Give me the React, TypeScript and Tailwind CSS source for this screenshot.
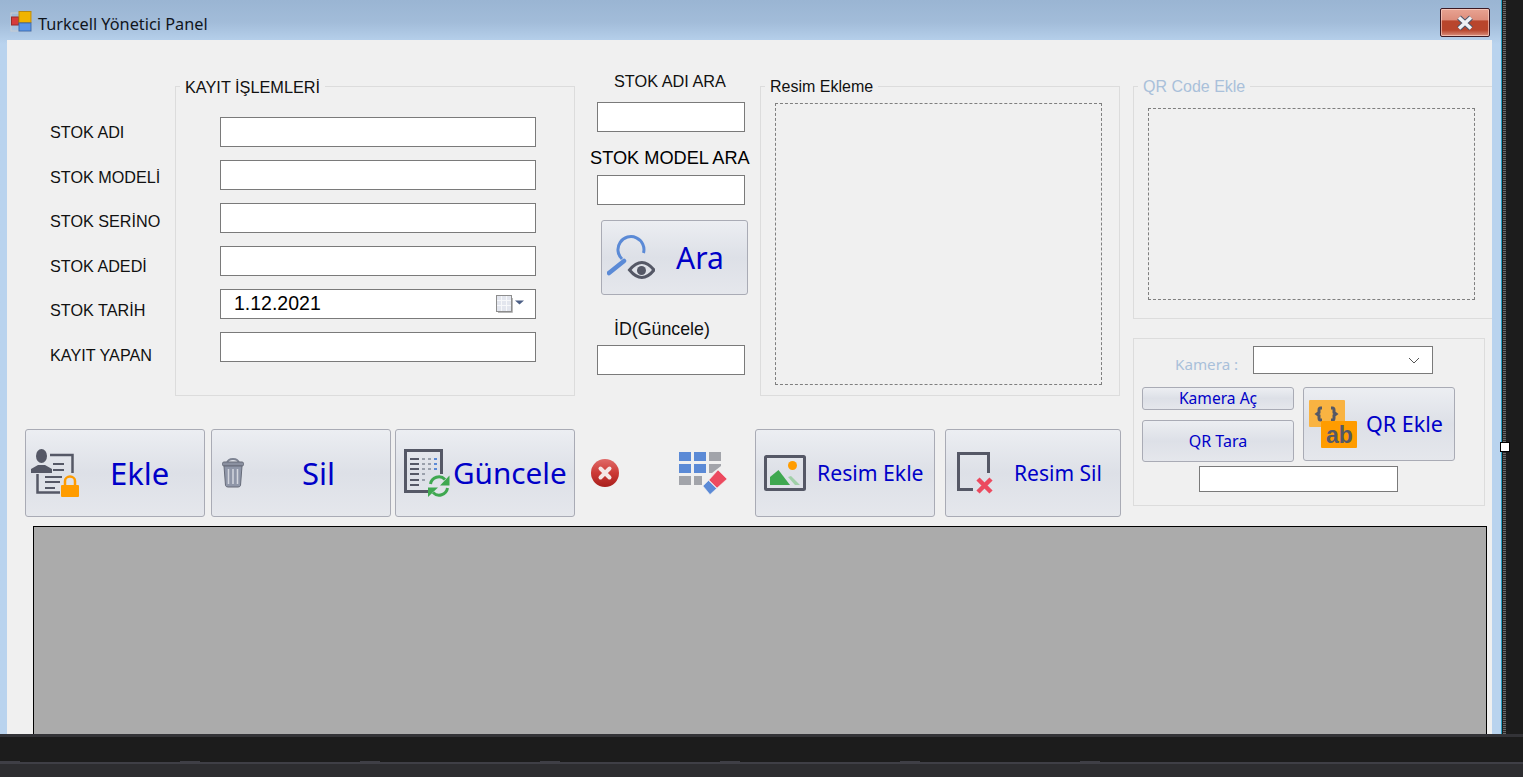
import { ReactNode } from 'react';

const sans = 'font-["Liberation_Sans",Arial,sans-serif]';
const tahoma = 'font-["Noto_Sans",sans-serif]';

function Input({ className = '' }: { className?: string }) {
    return <input className={`block border border-[#7a7a7a] bg-white ${className}`} />;
}

function FormButton({ className = '', children }: { className?: string; children: ReactNode }) {
    return (
        <div className={`flex shrink-0 items-center rounded-[3px] border border-[#a9abb5] bg-gradient-to-b from-[#eceef2] via-[#dde0e7] to-[#e5e7ec] text-[#0000c8] ${tahoma} ${className}`}>
            {children}
        </div>
    );
}

function EkleIcon() {
    return (
        <svg width="50" height="50" viewBox="30 448 50 50" className="ml-[4px] shrink-0">
            <path d="M50 455H72.500V473M37.500 474V492.500H60" fill="none" stroke="#555866" strokeWidth="2.500" />
            <path d="M53 464H64M53 470H64M45 477H62M45 482H60M45 488H55" stroke="#555866" strokeWidth="2" />
            <ellipse cx="41.500" cy="456" rx="5.500" ry="7" fill="#555866" />
            <path d="M31 473V469L38 465H45L52 469V473Z" fill="#555866" />
            <path d="M65 487V481A5 4.500 0 0 1 75 481V487" fill="none" stroke="#ff9c00" strokeWidth="2.500" />
            <rect x="61" y="485" width="18" height="12" rx="1" fill="#ff9c00" />
        </svg>
    );
}

function TrashIcon() {
    return (
        <svg width="24" height="30" viewBox="221 458 24 30" className="ml-[9px] shrink-0">
            <path d="M227 463Q228 459 233 459Q238 459 239 463" fill="none" stroke="#7d8392" strokeWidth="2" />
            <rect x="222.500" y="462" width="21" height="4" rx="1.500" fill="#8a90a0" stroke="#666b79" />
            <path d="M224 466H242L240.500 485.500Q240 487 238 487H228Q226 487 225.500 485.500Z" fill="#8f96a8" stroke="#666b79" />
            <path d="M228.500 469V484M233 469V484M237.500 469V484" stroke="#d3d6de" strokeWidth="1.500" />
        </svg>
    );
}

function GridRefreshIcon() {
    return (
        <svg width="46" height="48" viewBox="404 449 46 48" className="ml-[8px] shrink-0">
            <path d="M430 491.500H405.500V450.500H441.500V474" fill="none" stroke="#555866" strokeWidth="3" />
            <path d="M410 459H419M410 464H419M410 469H419M410 474H419M410 480H419M410 485H419" stroke="#555866" strokeWidth="2" />
            <path d="M422 459H425M428 459H431M422 464H425M428 464H431M422 469H425M428 469H431M422 474H425M422 480H425" stroke="#9aa0ab" strokeWidth="2" />
            <path d="M434 459H437M434 464H437M434 469H437" stroke="#5b8ad6" strokeWidth="2" />
            <path d="M430.500 484A8.500 8.500 0 0 1 445 479.500" fill="none" stroke="#3fa850" strokeWidth="3" />
            <path d="M449.500 475.500V485.500H440Z" fill="#3fa850" />
            <path d="M447.500 488A8.500 8.500 0 0 1 433 492.500" fill="none" stroke="#3fa850" strokeWidth="3" />
            <path d="M428 497V487.500H438Z" fill="#3fa850" />
        </svg>
    );
}

function RedCross() {
    return (
        <svg width="30" height="30" viewBox="0 0 30 30" className="shrink-0">
            <defs>
                <linearGradient id="redc" x1="0" y1="0" x2="0" y2="1">
                    <stop offset="0" stopColor="#e06a68" />
                    <stop offset="0.5" stopColor="#cc3a36" />
                    <stop offset="1" stopColor="#a81f1c" />
                </linearGradient>
            </defs>
            <circle cx="15" cy="15" r="14" fill="url(#redc)" />
            <path d="M10.500 10.500L19.500 19.500M19.500 10.500L10.500 19.500" stroke="#f4e6e6" strokeWidth="4" strokeLinecap="round" />
        </svg>
    );
}

function EraserIcon() {
    return (
        <svg width="48" height="44" viewBox="679 453 48 44" className="shrink-0">
            <path d="M679 454H691V463H679ZM694 454H706V463H694ZM679 466H691V475H679ZM694 466H706V475H694Z" fill="#5b8ad6" />
            <path d="M709 454H721V463H709ZM709 466H721V468L712 475H709ZM679 478H691V487H679ZM694 478H702V487H694Z" fill="#a2a4aa" />
            <path d="M718 472L727 481L717 490L709 482Z" fill="#ec4a5f" stroke="#f0f0f0" strokeWidth="0.500" />
            <path d="M708.500 482.500L716.500 490.500L710 496.500L703 488Z" fill="#5b8ad6" stroke="#f0f0f0" strokeWidth="0.500" />
        </svg>
    );
}

function PictureIcon() {
    return (
        <svg width="42" height="36" viewBox="764 455 42 36" className="ml-[8px] shrink-0">
            <rect x="765.500" y="456.500" width="39" height="33" rx="1" fill="none" stroke="#555866" strokeWidth="3" />
            <path d="M770 485V477L778.500 470L790 485Z" fill="#3fa850" />
            <path d="M788 477L791 476L800 485H795Z" fill="#a0d0a8" />
            <circle cx="792.500" cy="465.500" r="4.500" fill="#ff9c00" />
        </svg>
    );
}

function PictureRemoveIcon() {
    return (
        <svg width="37" height="43" viewBox="957 452 37 43" className="ml-[11px] shrink-0">
            <path d="M973 489.500H958.500V453.500H988.500V473" fill="none" stroke="#555866" strokeWidth="3" />
            <path d="M978 479L991 492M991 479L978 492" stroke="#ec4a5f" strokeWidth="4.500" />
        </svg>
    );
}

function SearchEyeIcon() {
    return (
        <svg width="48" height="46" viewBox="607 232 48 46" className="ml-[5px] shrink-0">
            <path d="M622 256A13 13 0 1 1 643.500 250" fill="none" stroke="#5b8ad6" strokeWidth="3" />
            <path d="M609 270L624 258" stroke="#5b8ad6" strokeWidth="4.500" strokeLinecap="round" />
            <path d="M629.500 267Q642 252 654 267Q642 282 629.500 267Z" fill="none" stroke="#555866" strokeWidth="3" />
            <circle cx="641.500" cy="267.500" r="4.500" fill="#555866" />
        </svg>
    );
}

function QrAddIcon() {
    return (
        <svg width="48" height="48" viewBox="1309 400 48 48" className="ml-[5px] shrink-0">
            <rect x="1309" y="400" width="36" height="27" rx="1" fill="#f9b342" />
            <path d="M1322 408H1320.500Q1319 408 1319 410V412.500L1317 414L1319 415.500V418Q1319 420 1320.500 420H1322" fill="none" stroke="#555866" strokeWidth="3" />
            <path d="M1331 408H1332.500Q1334 408 1334 410V412.500L1336 414L1334 415.500V418Q1334 420 1332.500 420H1331" fill="none" stroke="#555866" strokeWidth="3" />
            <rect x="1321" y="421" width="36" height="27" rx="1" fill="#ff9c00" />
            <text x="1326" y="443" fontSize="23" fontWeight="700" fill="#555866" fontFamily="'Liberation Sans', sans-serif">ab</text>
        </svg>
    );
}

function DatePicker() {
    return (
        <div className="flex h-[30px] w-[316px] items-center border border-[#7a7a7a] bg-white">
            <span className={`ml-[13px] text-[19.500px] leading-none text-black ${sans}`}>1.12.2021</span>
            <svg width="30" height="20" viewBox="0 0 30 20" className="ml-auto mr-[10px]">
                <rect x="1.500" y="1.500" width="15" height="16" fill="#e3e6ee" stroke="#8d8d8d" />
                <path d="M6.500 2V17M11.500 2V17M2 6.500H16M2 11.500H16" stroke="#f7f8fa" />
                <path d="M3 18.500H17.500V4" fill="none" stroke="#b8b8b8" />
                <path d="M20 6.500H29L24.500 10.500Z" fill="#4c5f85" />
            </svg>
        </div>
    );
}

export default function App() {
    const labels = ['STOK ADI', 'STOK MODELİ', 'STOK SERİNO', 'STOK ADEDİ', 'STOK TARİH', 'KAYIT YAPAN'];
    const bumps = [0, 1, 2, 3, 4, 5, 6];

    return (
        <div className={`relative flex h-[777px] w-[1523px] flex-col overflow-hidden bg-[#1c1c1c] ${sans}`}>
            <div className="flex h-[734px] shrink-0">
                {/* Form window */}
                <div className="flex h-[734px] w-[1501px] shrink-0 flex-col overflow-hidden bg-gradient-to-b from-[#9ab5d3] from-0% via-[#a2bcd9] via-[3%] to-[#b9d3ee] to-[6%]">
                    <div className="relative flex h-[40px] shrink-0 items-center pt-[8px]">
                        <svg width="22" height="22" viewBox="0 0 22 22" className="mb-[6px] ml-[10px]">
                            <rect x="1" y="3" width="20" height="18" fill="none" stroke="#c9ccd0" />
                            <rect x="1.500" y="7" width="7" height="8" fill="#d63a3a" stroke="#9a2a2a" />
                            <rect x="9" y="1.500" width="12" height="11" fill="#f0b400" stroke="#b98a10" />
                            <rect x="9" y="13" width="12" height="8" fill="#5b96e8" stroke="#3c6cb0" />
                        </svg>
                        <span className={`ml-[6px] text-[16.300px] text-[#10151c] ${tahoma}`}>Turkcell Yönetici Panel</span>
                        <div className="absolute left-[1440px] top-[8px] flex h-[29px] w-[50px] items-center justify-center rounded-[2px] border border-[#3c1a24] bg-[linear-gradient(180deg,#e8a392_0%,#dc8c7a_42%,#b8452c_43%,#b8452c_78%,#d98f7e_100%)] shadow-[inset_0_0_0_1px_rgba(255,220,210,0.6)]">
                            <svg width="18" height="16" viewBox="0 0 18 16">
                                <path d="M3 2.500L15 13.500M15 2.500L3 13.500" stroke="#4a5468" strokeWidth="5.500" />
                                <path d="M3 2.500L15 13.500M15 2.500L3 13.500" stroke="#eef0f4" strokeWidth="3.500" />
                            </svg>
                        </div>
                    </div>

                    <div className="ml-[7px] flex w-[1485px] flex-1 flex-col bg-[#f0f0f0]">
                        <div className="flex h-[486px] shrink-0">
                            <div className="w-[1126px] shrink-0">
                                <div className="flex h-[356px] pt-[35px]">
                                    {/* Labels + KAYIT ISLEMLERI */}
                                    <div className="ml-[43px] w-[125px] shrink-0 pt-[47px] text-[16.200px] leading-[20px] text-[#111]">
                                        {labels.map((l) => (
                                            <div key={l} className="mb-[24.500px]">{l}</div>
                                        ))}
                                    </div>
                                    <fieldset className="h-[321px] w-[400px] shrink-0 border border-[#dcdcdc]">
                                        <legend className="ml-[4px] px-[5px] pt-[2px] text-[16.300px] leading-[20px] text-[#111]">KAYIT İŞLEMLERİ</legend>
                                        <div className="ml-[44px] mt-[20px]">
                                            {labels.map((l, i) => (
                                                <div key={l} className="h-[43px]">
                                                    {i === 4 ? <DatePicker /> : <Input className="h-[30px] w-[316px]" />}
                                                </div>
                                            ))}
                                        </div>
                                    </fieldset>

                                    {/* Search column */}
                                    <div className="ml-[15px] flex w-[161px] shrink-0 flex-col text-[#111]">
                                        <div className="ml-[24px] mt-[-4px] text-[16.300px] leading-[20px]">STOK ADI ARA</div>
                                        <Input className="ml-[7px] mt-[11px] h-[30px] w-[148px]" />
                                        <div className="mt-[16px] whitespace-nowrap text-[18.200px] leading-[20px] text-black">STOK MODEL ARA</div>
                                        <Input className="ml-[7px] mt-[7px] h-[30px] w-[148px]" />
                                        <FormButton className="ml-[11px] mt-[15px] h-[75px] w-[147px]">
                                            <SearchEyeIcon />
                                            <span className="ml-[21px] text-[30px] leading-none">Ara</span>
                                        </FormButton>
                                        <div className="ml-[24px] mt-[24px] whitespace-nowrap text-[17.800px] leading-[20px]">İD(Güncele)</div>
                                        <Input className="ml-[7px] mt-[6px] h-[30px] w-[148px]" />
                                    </div>

                                    <fieldset className="ml-[9px] h-[321px] w-[360px] shrink-0 border border-[#dcdcdc]">
                                        <legend className="ml-[4px] px-[5px] pt-[2px] text-[16px] leading-[20px] text-[#111]">Resim Ekleme</legend>
                                        <div className="ml-[14px] mt-[6px] h-[282px] w-[327px] border border-dashed border-[#7f7f7f]" />
                                    </fieldset>
                                </div>

                                {/* Action buttons */}
                                <div className="ml-[18px] mt-[33px] flex h-[88px] items-center">
                                    <FormButton className="h-[88px] w-[180px]">
                                        <EkleIcon />
                                        <span className="ml-[30px] text-[31px] leading-none">Ekle</span>
                                    </FormButton>
                                    <FormButton className="ml-[6px] h-[88px] w-[180px]">
                                        <TrashIcon />
                                        <span className="ml-[57px] text-[31px] leading-none">Sil</span>
                                    </FormButton>
                                    <FormButton className="ml-[4px] h-[88px] w-[180px]">
                                        <GridRefreshIcon />
                                        <span className="ml-[3px] text-[29.700px] leading-none">Güncele</span>
                                    </FormButton>
                                    <div className="ml-[15px]"><RedCross /></div>
                                    <div className="ml-[59px]"><EraserIcon /></div>
                                    <FormButton className="ml-[28px] h-[88px] w-[180px]">
                                        <PictureIcon />
                                        <span className="ml-[11px] text-[21.200px] leading-none">Resim Ekle</span>
                                    </FormButton>
                                    <FormButton className="ml-[10px] h-[88px] w-[176px]">
                                        <PictureRemoveIcon />
                                        <span className="ml-[20px] text-[21px] leading-none">Resim Sil</span>
                                    </FormButton>
                                </div>
                            </div>

                            {/* Right column: QR */}
                            <div className="w-[359px] shrink-0 pt-[35px]">
                                <fieldset className="h-[244px] w-[359px] border border-r-0 border-[#dcdcdc]">
                                    <legend className="ml-[4px] px-[5px] pt-[2px] text-[16px] leading-[20px] text-[#a9c0da]">QR Code Ekle</legend>
                                    <div className="ml-[14px] mt-[11px] h-[192px] w-[327px] border border-dashed border-[#7f7f7f]" />
                                </fieldset>
                                <div className="mt-[19px] h-[168px] w-[352px] border border-[#dcdcdc]">
                                    <div className="ml-[41px] mt-[7px] flex items-center">
                                        <span className={`mt-[7px] w-[78px] whitespace-nowrap text-[15.200px] leading-[20px] text-[#a9c0da] ${tahoma}`}>Kamera :</span>
                                        <div className="flex h-[28px] w-[180px] items-center justify-end border border-[#7a7a7a] bg-white pr-[12px]">
                                            <svg width="12" height="7" viewBox="0 0 12 7">
                                                <path d="M1 1L6 6L11 1" fill="none" stroke="#555" />
                                            </svg>
                                        </div>
                                    </div>
                                    <div className="ml-[8px] mt-[13px] flex">
                                        <div className="w-[152px] shrink-0">
                                            <FormButton className="h-[23px] w-[152px] justify-center text-[15.600px] leading-none">Kamera Aç</FormButton>
                                            <FormButton className="mt-[10px] h-[42px] w-[152px] justify-center text-[16px] leading-none">QR Tara</FormButton>
                                        </div>
                                        <FormButton className="ml-[9px] h-[74px] w-[152px]">
                                            <QrAddIcon />
                                            <span className="ml-[9px] text-[21.500px] leading-none">QR Ekle</span>
                                        </FormButton>
                                    </div>
                                    <Input className="ml-[65px] mt-[4px] h-[26px] w-[199px]" />
                                </div>
                            </div>
                        </div>

                        {/* DataGridView */}
                        <div className="ml-[26px] w-[1454px] flex-1 border border-b-0 border-black bg-[#ababab]" />
                    </div>
                </div>

                {/* Designer selection strip */}
                <div className="w-px shrink-0 bg-[#2aa0c0]" />
                <div className="w-px shrink-0" />
                <div className="w-[3px] shrink-0 bg-[repeating-linear-gradient(0deg,#6a6a6a_0,#6a6a6a_1px,#2a2a2a_1px,#2a2a2a_2px)]" />
            </div>

            <div className="absolute left-[1500px] top-[442px] h-[10px] w-[10px] border border-black bg-white" />

            {/* Visual Studio bottom panels */}
            <div className="h-[3px] shrink-0 bg-[#333337]" />
            <div className="h-[24px] shrink-0 bg-[#1c1c1c]" />
            <div className="flex h-px shrink-0 gap-[160px] bg-[#1c1c1c]">
                {bumps.map((b) => (
                    <div key={b} className="h-px w-[20px] shrink-0 bg-[#3f3f46]" />
                ))}
            </div>
            <div className="h-[2px] shrink-0 bg-[#3f3f46]" />
            <div className="flex-1 bg-[#2d2d30]" />
        </div>
    );
}
